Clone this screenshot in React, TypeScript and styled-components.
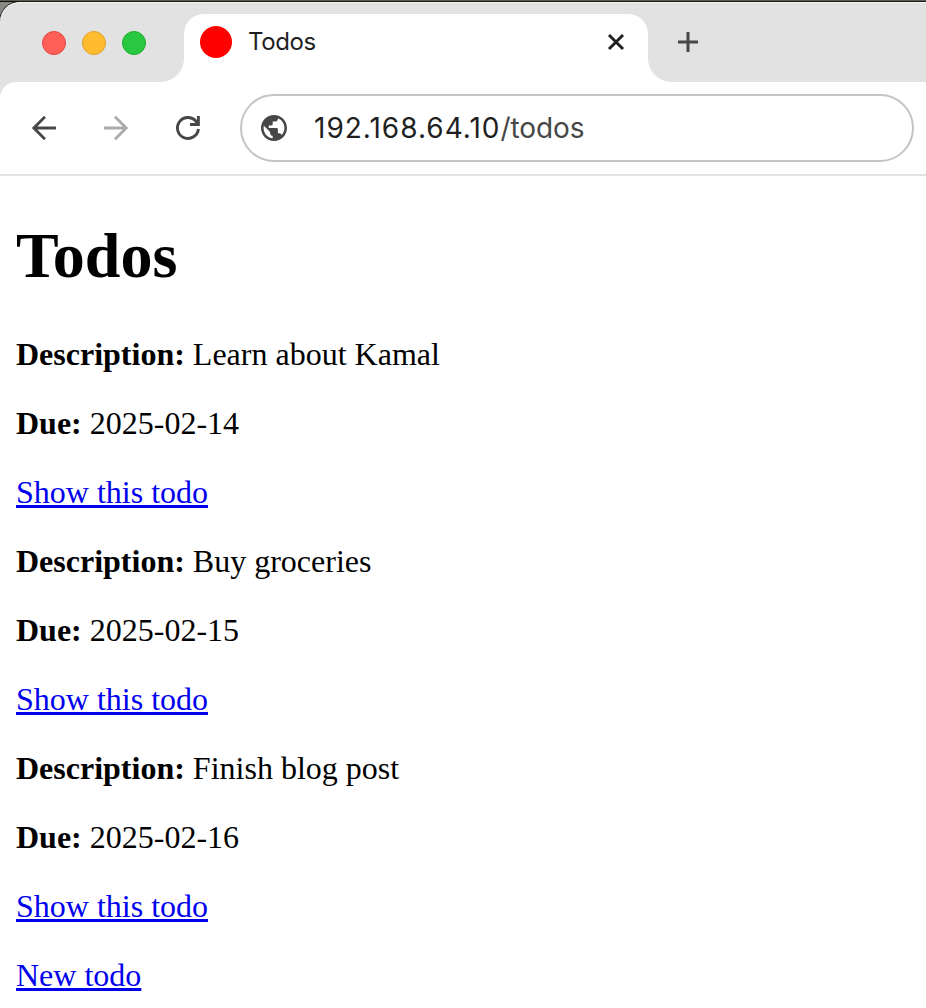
import React from "react";
import styled, { createGlobalStyle } from "styled-components";

const GlobalStyle = createGlobalStyle`
  *, *::before, *::after { box-sizing: border-box; }
  body { margin: 0; background: #fff; overflow: hidden; }
`;

const Desktop = styled.div`
  height: 1008px;
  padding-top: 2px;
  background: linear-gradient(to bottom, #5c5c50 0, #5c5c50 1px, #0e0e0a 1px, #0e0e0a 2px, #8a8a84 2px);
`;

const Window = styled.div`
  height: 1006px;
  display: flex;
  flex-direction: column;
  background: #e2e2e2;
  border-top-left-radius: 20px;
  overflow: hidden;
  box-shadow: inset 0 1px 0 #f4f4f4, 0 0 0 1px #1c1c1a;
`;

const TabStrip = styled.div`
  height: 80px;
  flex: none;
  display: flex;
  align-items: flex-end;
`;

const TrafficLights = styled.div`
  width: 184px;
  height: 80px;
  padding: 1px 0 0 42px;
  display: flex;
  align-items: center;
  gap: 16px;
`;

const Light = styled.span<{ $fill: string; $edge: string }>`
  width: 24px;
  height: 24px;
  border-radius: 50%;
  background: ${(p) => p.$fill};
  border: 1px solid ${(p) => p.$edge};
`;

const Tab = styled.div`
  position: relative;
  width: 464px;
  height: 68px;
  padding: 0 22px 12px 16px;
  display: flex;
  align-items: center;
  background: #fff;
  border-radius: 20px 20px 0 0;

  &::before,
  &::after {
    content: "";
    position: absolute;
    bottom: 0;
    width: 24px;
    height: 24px;
  }
  &::before {
    left: -24px;
    background: radial-gradient(circle at 0 0, transparent 23.5px, #fff 24.5px);
  }
  &::after {
    right: -24px;
    background: radial-gradient(circle at 100% 0, transparent 23.5px, #fff 24.5px);
  }
`;

const Favicon = styled.span`
  width: 32px;
  height: 32px;
  border-radius: 50%;
  background: #f00;
`;

const TabTitle = styled.span`
  flex: 1;
  margin-left: 16px;
  font: 400 24px/30px Inter, "Liberation Sans", sans-serif;
  letter-spacing: -0.4px;
  color: #1f1f1f;
`;

const NewTab = styled.div`
  height: 80px;
  margin-left: 30px;
  display: flex;
  align-items: center;
`;

const Toolbar = styled.div`
  height: 94px;
  flex: none;
  padding: 0 12px 0 28px;
  display: flex;
  align-items: center;
  background: #fff;
  border-bottom: 2px solid #e2e2e2;
  border-top-left-radius: 16px;
`;

const NavButtons = styled.div`
  width: 212px;
  display: flex;
  gap: 40px;
`;

const AddressBar = styled.div`
  flex: 1;
  height: 68px;
  padding-left: 16px;
  display: flex;
  align-items: center;
  border: 2px solid #c4c4c4;
  border-radius: 34px;
`;

const Url = styled.span`
  margin-left: 24px;
  font: 400 28px/34px Inter, "Liberation Sans", sans-serif;
  letter-spacing: 1px;
  color: #1f1f1f;
`;

const Path = styled.span`
  letter-spacing: -0.1px;
  color: #474747;
`;

const Page = styled.main`
  flex: 1;
  padding: 43px 16px 0;
  background: #fff;
  color: #000;
  font: 400 32px/37px "Liberation Serif", serif;
`;

const Heading = styled.h1`
  margin: 0 0 43px;
  font-size: 64px;
  line-height: 74px;
  font-weight: 700;
`;

const Line = styled.p`
  margin: 0 0 32px;
`;

const Link = styled.a`
  color: #0000ee;
  text-decoration: underline;
`;

const todos = [
  { description: "Learn about Kamal", due: "2025-02-14" },
  { description: "Buy groceries", due: "2025-02-15" },
  { description: "Finish blog post", due: "2025-02-16" },
];

const BackIcon = () => (
  <svg width="32" height="32" viewBox="0 0 32 32" fill="none" stroke="#474747" strokeWidth="2.8">
    <path d="M28 16H6M17 4.8L5.8 16L17 27.2" />
  </svg>
);

const ForwardIcon = () => (
  <svg width="32" height="32" viewBox="0 0 32 32" fill="none" stroke="#ababab" strokeWidth="2.8">
    <path d="M4 16H26M15 4.8L26.2 16L15 27.2" />
  </svg>
);

const ReloadIcon = () => (
  <svg width="32" height="32" viewBox="0 0 32 32" fill="none" stroke="#474747" strokeWidth="2.9">
    <path d="M26.4 17A10.5 10.5 0 1 1 23.6 8.8L26.2 12" />
    <path d="M26.4 4V12.5H18" />
    <path d="M22 12L26 8V12Z" fill="#474747" stroke="none" />
  </svg>
);

const GlobeIcon = () => (
  <svg width="32" height="32" viewBox="-0.3 -0.3 24.6 24.6" fill="#474747">
    <path d="M12 2C6.48 2 2 6.48 2 12s4.48 10 10 10 10-4.48 10-10S17.52 2 12 2zm-1 17.93c-3.95-.49-7-3.85-7-7.93 0-.62.08-1.21.21-1.79L9 15v1c0 1.1.9 2 2 2v1.93zm6.9-2.54c-.26-.81-1-1.39-1.9-1.39h-1v-3c0-.55-.45-1-1-1H8v-2h2c.55 0 1-.45 1-1V7h2c1.1 0 2-.9 2-2v-.41c2.93 1.19 5 4.06 5 7.41 0 2.08-.8 3.97-2.1 5.39z" />
  </svg>
);

const CloseIcon = () => (
  <svg width="20" height="20" viewBox="0 0 20 20" fill="none" stroke="#1f1f1f" strokeWidth="2.9">
    <path d="M3 3L17 17M17 3L3 17" />
  </svg>
);

const PlusIcon = () => (
  <svg width="20" height="20" viewBox="0 0 20 20" fill="none" stroke="#474747" strokeWidth="3">
    <path d="M10 0V20M0 10H20" />
  </svg>
);

export default function App() {
  return (
    <Desktop>
      <GlobalStyle />
      <Window>
        <TabStrip>
          <TrafficLights>
            <Light $fill="#ff5f57" $edge="#e2463f" />
            <Light $fill="#febc2e" $edge="#e0a028" />
            <Light $fill="#28c840" $edge="#1dad2b" />
          </TrafficLights>
          <Tab>
            <Favicon />
            <TabTitle>Todos</TabTitle>
            <CloseIcon />
          </Tab>
          <NewTab>
            <PlusIcon />
          </NewTab>
        </TabStrip>
        <Toolbar>
          <NavButtons>
            <BackIcon />
            <ForwardIcon />
            <ReloadIcon />
          </NavButtons>
          <AddressBar>
            <GlobeIcon />
            <Url>
              192.168.64.10<Path>/todos</Path>
            </Url>
          </AddressBar>
        </Toolbar>
        <Page>
          <Heading>Todos</Heading>
          {todos.map((todo) => (
            <div key={todo.due}>
              <Line>
                <strong>Description:</strong> {todo.description}
              </Line>
              <Line>
                <strong>Due:</strong> {todo.due}
              </Line>
              <Line>
                <Link href="#">Show this todo</Link>
              </Line>
            </div>
          ))}
          <Link href="#">New todo</Link>
        </Page>
      </Window>
    </Desktop>
  );
}
